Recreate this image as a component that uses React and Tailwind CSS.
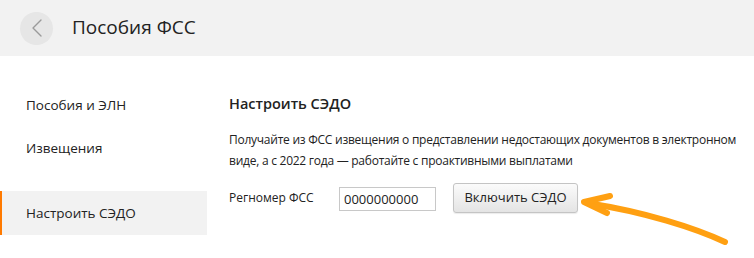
import { ChevronLeft } from "lucide-react";

const navItems = [
  { label: "Пособия и ЭЛН", active: false },
  { label: "Извещения", active: false },
  { label: "Настроить СЭДО", active: true },
];

// orange hand-drawn arrow pointing at the button
const Arrow = () => (
  <svg width="160" height="60" viewBox="0 0 160 60" className="absolute left-[575px] top-[188px] pointer-events-none">
    <g fill="none" stroke="#ffa012" strokeWidth="6" strokeLinecap="round" strokeLinejoin="round">
      <path d="M150 54 C 120 40, 70 24, 12 15" />
      <path d="M35 8 L 9 14 L 32 25" />
    </g>
  </svg>
);

const App = () => {
  return (
    <div className="relative w-[754px] h-[258px] bg-white overflow-hidden text-[#222]" style={{ fontFamily: '"Open Sans", "Noto Sans", sans-serif' }}>
      {/* HEADER */}
      <div className="h-[56px] bg-[#f2f2f2] flex items-center pl-[20px]">
        <button className="w-[33px] h-[33px] rounded-full bg-[#e6e6e6] flex items-center justify-center text-[#9a9a9a]">
          <ChevronLeft size={32} strokeWidth={1} />
        </button>
        <div className="ml-[19px] text-[19px] text-[#222] mb-[1px]">Пособия ФСС</div>
      </div>

      <div className="flex">
        {/* SIDEBAR */}
        <div className="w-[207px] shrink-0 pt-[35px] flex flex-col">
          {navItems.map((item) => (
            <div
              key={item.label}
              className={
                item.active
                  ? "h-[44px] mt-[14px] flex items-center pl-[24px] bg-[#f2f2f2] border-l-[2px] border-[#ff7a00] text-[13.5px]"
                  : "h-[28px] mb-[15px] flex items-center pl-[26px] text-[13.5px]"
              }
            >
              {item.label}
            </div>
          ))}
        </div>

        {/* CONTENT */}
        <div className="pl-[22px] pt-[38px] w-[547px] shrink-0">
          <div className="text-[14.5px] font-semibold leading-[20px]">Настроить СЭДО</div>
          <p className="mt-[15px] text-[12px] leading-[21px] tracking-[-0.25px]">
            Получайте из ФСС извещения о представлении недостающих документов в электронном виде, а с 2022 года — работайте с проактивными выплатами
          </p>
          <div className="mt-[12px] flex items-center">
            <div className="w-[110px] text-[12px]">Регномер ФСС</div>
            <input
              readOnly
              value="0000000000"
              className="w-[97px] h-[24px] mt-[2px] border border-[#c8c8c8] px-[4px] text-[13px] text-[#222] outline-none"
            />
            <button className="ml-[17px] h-[30px] w-[125px] rounded-[3px] border border-[#c4c4c4] bg-gradient-to-b from-[#fbfbfb] to-[#e4e4e4] text-[13px] text-[#222] shadow-[0_1px_1px_rgba(0,0,0,0.08)]">
              Включить СЭДО
            </button>
          </div>
        </div>
      </div>

      <Arrow />
    </div>
  );
};

export default App;
